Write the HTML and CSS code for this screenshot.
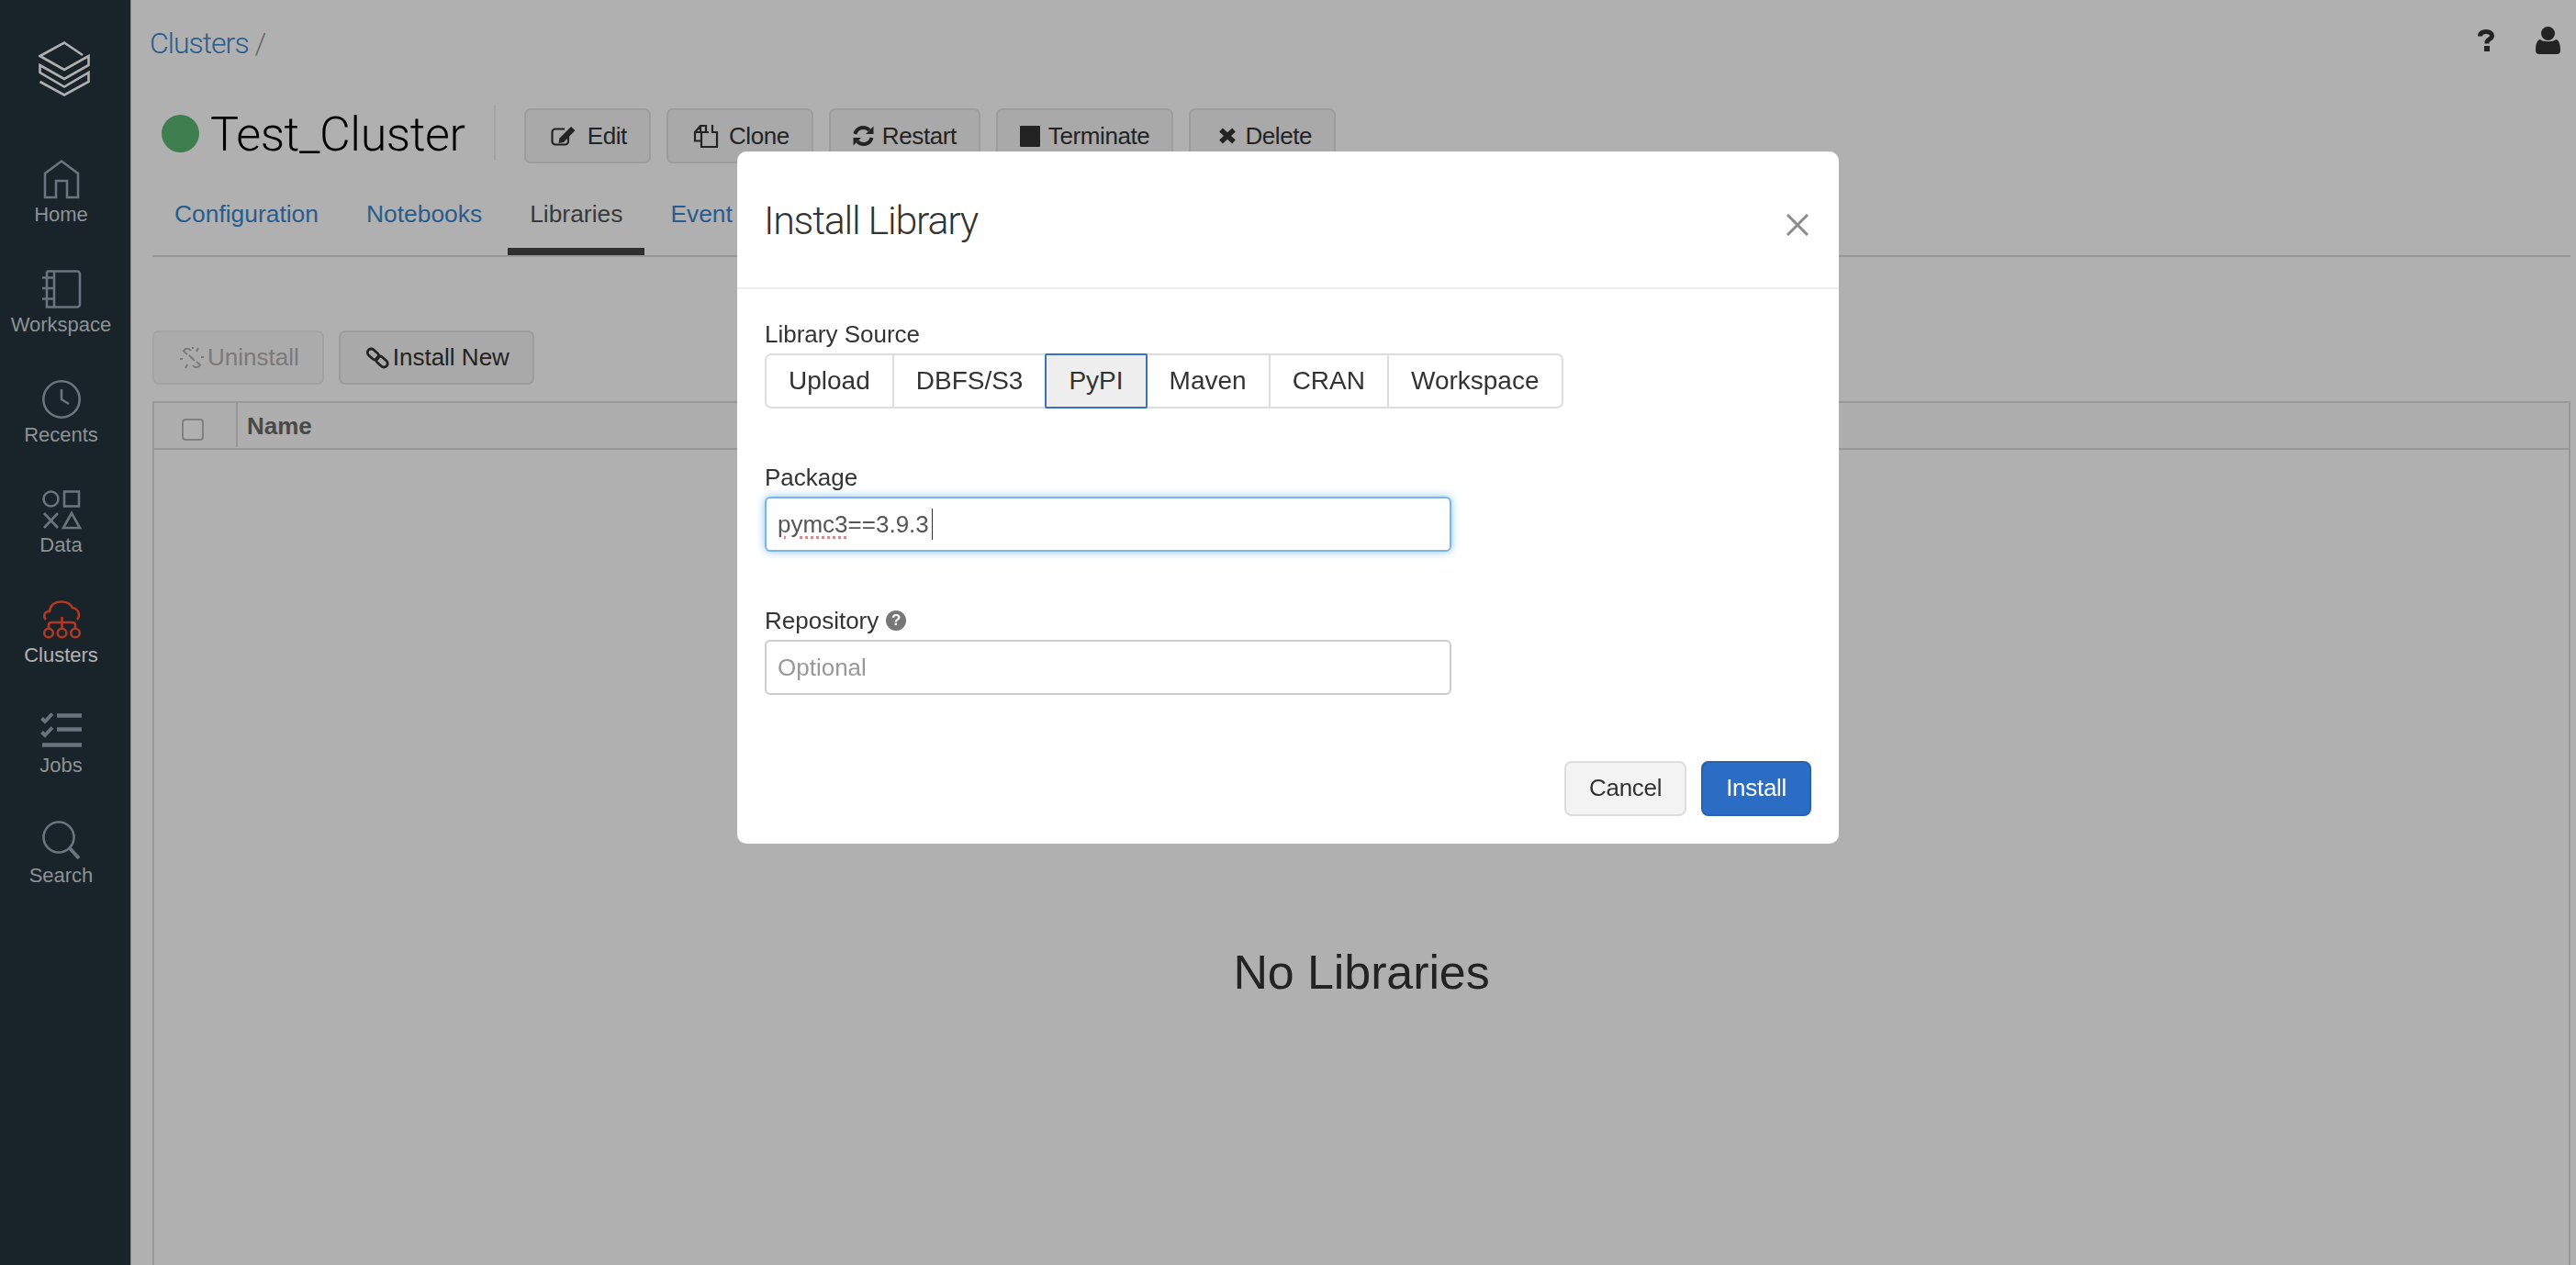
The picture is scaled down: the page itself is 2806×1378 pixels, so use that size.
FILE: index.html
```html
<!DOCTYPE html>
<html lang="en">
<head>
<meta charset="utf-8">
<title>Test_Cluster - Clusters</title>
<link rel="stylesheet" href="styles.css">
</head>
<body>
<div class="app">
  <nav class="sidebar">
    <div class="logo">
      <svg class="logo-svg" viewBox="0 0 56 60"><path d="M48 15 L28 1.5 L1.5 16 L28 31 L54.5 16 V26 L28 41 L1.5 26 V34 L28 49.5 L54.5 34 V44 L28 58.5 L1.5 44"/></svg>
    </div>
    <a class="nav-item">
      <svg class="nav-icon" viewBox="0 0 42 42"><path d="M3 41 V15 L21 1.5 L39 15 V41 H27 V23 H15 V41 Z"/></svg>
      <span>Home</span>
    </a>
    <a class="nav-item">
      <svg class="nav-icon" viewBox="0 0 42 42"><path d="M5 1.5 H38 A3 3 0 0 1 41 4.5 V37.5 A3 3 0 0 1 38 40.5 H5 V1.5 M13 1.5 V40.5 M0 8.5 H13 M0 20 H13 M0 31.5 H13"/></svg>
      <span>Workspace</span>
    </a>
    <a class="nav-item">
      <svg class="nav-icon" viewBox="0 0 42 42"><circle cx="21" cy="21" r="19.7"/><path d="M21 10 V21 L29 26"/></svg>
      <span>Recents</span>
    </a>
    <a class="nav-item">
      <svg class="nav-icon" viewBox="0 0 42 42"><circle cx="9.5" cy="9.5" r="8"/><rect x="24" y="1.5" width="16" height="16"/><path d="M2 25 L17 41 M17 25 L2 41 M32 25 L41 41 H23 Z"/></svg>
      <span>Data</span>
    </a>
    <a class="nav-item nav-active">
      <svg class="nav-icon" viewBox="0 0 42 42"><path d="M4 21 C1 18 2 13 6 12 H8 C9 4 15 1.500 21 1.500 C27 1.500 31 4 33 8 C38 9 40 13 40 16 C40 18 39 20 38 21 M7 30 V27 Q7 24 10 24 H33 Q36 24 36 27 V30 M21.500 18 V30"/><circle cx="7" cy="35.500" r="4.800"/><circle cx="21.500" cy="35.500" r="4.800"/><circle cx="36" cy="35.500" r="4.800"/></svg>
      <span>Clusters</span>
    </a>
    <a class="nav-item">
      <svg class="nav-icon jobs-icon" viewBox="0 0 45 39"><path class="thick" d="M1.500 7 L5 10.500 L13 2 M1.500 22 L5 25.500 L13 17"/><path class="bars" d="M18 4 H45 M18 19 H45 M2 36 H45"/></svg>
      <span>Jobs</span>
    </a>
    <a class="nav-item">
      <svg class="nav-icon" viewBox="0 0 42 42"><circle cx="18" cy="18" r="16.500"/><path class="thick" d="M29.500 29.500 L40 41"/></svg>
      <span>Search</span>
    </a>
  </nav>

  <main class="main">
    <header class="topbar">
      <div class="crumb"><a class="crumb-link">Clusters</a> <span class="crumb-sep">/</span></div>
      <div class="top-icons">
        <svg class="icon-help" viewBox="0 0 18 24"><path d="M2.500 7.500 C2.500 4 5.500 2.500 9 2.500 C13 2.500 15.500 4.500 15.500 7 C15.500 10 11 11 10 13.500 V15.500"/><rect x="7" y="18" width="6" height="6"/></svg>
        <svg class="icon-user" viewBox="0 0 27 30"><circle cx="13.500" cy="7.500" r="7.500"/><path d="M5 14 C8 17 19 17 22 14 C25 14.500 27 18 27 26 C27 29 25 30 23 30 H4 C2 30 0 29 0 26 C0 18 2 14.500 5 14 Z"/></svg>
      </div>
    </header>

    <section class="title-row">
      <span class="status-dot"></span>
      <h1 class="cluster-name">Test_Cluster</h1>
      <span class="title-sep"></span>
      <div class="actions">
        <button class="btn">
          <svg class="ico ico-edit" viewBox="0 0 34 22"><path class="line" d="M22 12 V17 A3.500 3.500 0 0 1 18.500 20.500 H8 A3.500 3.500 0 0 1 4.500 17 V7 A3.500 3.500 0 0 1 8 3.500 H18"/><path class="solid" d="M25 1 L29.500 5 L17 18 L11.500 19 L12.500 13.500 Z"/></svg>
          Edit
        </button>
        <button class="btn">
          <svg class="ico ico-clone" viewBox="0 0 33 26"><path class="line" d="M11 18.500 H5 V9 L11 2 H17 V9 M11 2 V9 H5 M12 9 H20 M12 9 V25 H29 V9 H24 V1 M12 9 L17 9"/></svg>
          Clone
        </button>
        <button class="btn">
          <svg class="ico ico-restart" viewBox="0 0 23 22"><path class="thickline" d="M2.500 9 A9 9 0 0 1 18 5 M20.500 13 A9 9 0 0 1 5 17"/><path class="solid" d="M22.500 0.500 V9 H14 Z M0.500 21.500 V13 H9 Z"/></svg>
          Restart
        </button>
        <button class="btn">
          <span class="stop-square"></span>
          Terminate
        </button>
        <button class="btn">
          <svg class="ico ico-delete" viewBox="0 0 26 18"><path class="xline" d="M9 2.500 L23 15.500 M23 2.500 L9 15.500"/></svg>
          Delete
        </button>
      </div>
    </section>

    <div class="tabs">
      <a class="tab">Configuration</a>
      <a class="tab">Notebooks</a>
      <a class="tab tab-active">Libraries</a>
      <a class="tab">Event</a>
    </div>

    <div class="toolbar">
      <button class="btn btn-tool btn-disabled">
        <svg class="ico ico-chain" viewBox="0 0 26 24"><path class="line" d="M8 8 L4 4.500 C6 1 10 1 12 4 M18 16 L22 19.500 C20 23 16 23 14 20 M10 9 L16 15 M3 13 H0 M8 19 L6 23 M18 5 L20 1 M23 11 H26 M14 2 V0"/></svg>
        Uninstall
      </button>
      <button class="btn btn-tool">
        <svg class="ico ico-chain" viewBox="0 0 25 22"><g class="line"><rect x="-7" y="-4" width="14" height="8" rx="4" transform="translate(7.500 7) rotate(42)"/><rect x="-7" y="-4" width="14" height="8" rx="4" transform="translate(17 15) rotate(42)"/></g></svg>
        Install New
      </button>
    </div>

    <section class="table">
      <div class="table-head">
        <div class="cell-check"><span class="checkbox"></span></div>
        <div class="cell-name">Name</div>
      </div>
      <h2 class="empty">No Libraries</h2>
    </section>
  </main>
</div>

<div class="backdrop"></div>

<div class="modal">
  <div class="modal-head">
    <h3 class="modal-title">Install Library</h3>
    <svg class="modal-close" viewBox="0 0 24 24"><path d="M1 1 L23 23 M23 1 L1 23"/></svg>
  </div>
  <div class="modal-body">
    <div class="field">
      <div class="label">Library Source</div>
      <div class="segments">
        <span class="seg">Upload</span>
        <span class="seg">DBFS/S3</span>
        <span class="seg seg-active">PyPI</span>
        <span class="seg">Maven</span>
        <span class="seg">CRAN</span>
        <span class="seg">Workspace</span>
      </div>
    </div>
    <div class="field">
      <div class="label">Package</div>
      <div class="input input-focus"><span class="misspelt">pymc3</span>==3.9.3<span class="caret"></span></div>
    </div>
    <div class="field">
      <div class="label">Repository <span class="help-dot">?</span></div>
      <div class="input input-empty">Optional</div>
    </div>
  </div>
  <div class="modal-foot">
    <button class="mbtn">Cancel</button>
    <button class="mbtn mbtn-primary">Install</button>
  </div>
</div>
</body>
</html>
```
FILE: styles.css
```css
* { box-sizing: border-box; }
html, body { margin: 0; height: 100%; overflow: hidden; }
body { font-family: "Liberation Sans", Arial, sans-serif; font-size: 26px; color: #333; background: #fff; }
h1, h2, h3 { margin: 0; font-weight: normal; }
button { font: inherit; }

.app { display: flex; height: 100vh; }

/* Sidebar */
.sidebar { width: 143px; flex: none; background: #23333d; border-right: 1px solid #c8c8c8; padding-right: 9px; display: flex; flex-direction: column; align-items: center; gap: 47px; }
.logo { height: 127px; padding-top: 45px; margin-left: 6px; }
.logo-svg { display: block; width: 56px; height: 60px; fill: none; stroke: #fff; stroke-width: 2.6; }
.nav-item { display: flex; flex-direction: column; align-items: center; width: 130px; color: #cbd2d6; font-size: 22px; line-height: 26px; }
.nav-icon { display: block; width: 42px; height: 42px; margin-bottom: 5px; fill: none; stroke: #9aa8b9; stroke-width: 2.6; overflow: visible; }
.nav-icon .thick { stroke-width: 4; }
.nav-icon .bars { stroke-width: 4.600; }
.jobs-icon { width: 45px; }
.nav-active { color: #fff; }
.nav-active .nav-icon { stroke: #ff5236; }

/* Main */
.main { flex: 1; min-width: 0; padding: 0 6px 0 23px; overflow: hidden; display: flex; flex-direction: column; }
.topbar { height: 115px; flex: none; display: flex; justify-content: space-between; align-items: flex-start; }
.crumb { margin-left: -3px; padding-top: 27px; font-family: Roboto, "Liberation Sans", sans-serif; font-weight: 300; font-size: 32px; line-height: 40px; letter-spacing: -1px; }
.crumb-link { color: #3a87cc; }
.crumb-sep { color: #999; }
.top-icons { display: flex; align-items: flex-start; padding-top: 29px; padding-right: 11px; gap: 45px; }
.icon-help { width: 18px; height: 24px; margin-top: 3px; fill: #333; }
.icon-help path { fill: none; stroke: #333; stroke-width: 5; }
.icon-user { width: 27px; height: 30px; fill: #333; }

.title-row { flex: none; height: 63px; display: flex; align-items: flex-start; padding-left: 10px; }
.status-dot { width: 41px; height: 41px; margin-top: 10px; border-radius: 50%; background: #5ab873; flex: none; }
.cluster-name { margin-left: 12px; margin-top: 2px; font-family: Roboto, "Liberation Sans", sans-serif; font-weight: 300; font-size: 52px; line-height: 60px; letter-spacing: -0.4px; color: #000; white-space: nowrap; }
.title-sep { width: 2px; height: 60px; margin-left: 31px; background: #eee; flex: none; }
.actions { display: flex; gap: 17px; margin-left: 31px; margin-top: 3px; }

.btn { display: inline-flex; align-items: center; justify-content: center; gap: 9px; height: 60px; padding: 0 24px; background: #f5f5f5; border: 2px solid #e3e3e3; border-radius: 7px; color: #333; white-space: nowrap; letter-spacing: -0.4px; }
.ico { display: block; flex: none; overflow: visible; }
.ico .line { fill: none; stroke: #333; stroke-width: 2.200; }
.ico .thickline { fill: none; stroke: #333; stroke-width: 4; }
.ico .xline { fill: none; stroke: #333; stroke-width: 5.500; }
.ico .solid { fill: #333; }
.ico-edit { width: 34px; height: 22px; }
.ico-clone { width: 33px; height: 26px; }
.ico-restart { width: 23px; height: 22px; }
.ico-delete { width: 26px; height: 18px; }
.stop-square { width: 22px; height: 23px; background: #333; border-radius: 1px; flex: none; }

.tabs { flex: none; height: 102px; padding-top: 22px; display: flex; gap: 4px; border-bottom: 2px solid #ddd; }
.tab { height: 78px; padding: 0 24px; line-height: 66px; font-size: 26.400px; color: #3a87cc; border-bottom: 8px solid transparent; white-space: nowrap; }
.tab-active { color: #555; border-bottom-color: #444; }

.toolbar { flex: none; display: flex; gap: 16px; margin-top: 80px; }
.btn-tool { height: 59px; padding: 0 25px 0 28px; gap: 4px; letter-spacing: 0; }
.btn-disabled { opacity: .65; color: #888; }
.btn-disabled .line { stroke: #888; stroke-width: 1.600; }
.ico-chain { width: 25px; height: 22px; }
.btn-tool .ico-chain .line { stroke-width: 2.800; }
.btn-disabled.btn-tool .ico-chain { width: 26px; height: 24px; }
.btn-disabled.btn-tool .ico-chain .line { stroke-width: 2; }

.table { flex: 1 0 auto; margin-top: 18px; border: 2px solid #ddd; border-bottom: 0; }
.table-head { display: flex; height: 51px; background: #fcfcfc; border-bottom: 2px solid #ddd; }
.cell-check { width: 91px; height: 48px; padding: 17px 0 0 30px; border-right: 2px solid #ddd; flex: none; }
.checkbox { display: block; width: 24px; height: 24px; border: 2px solid #bbb; border-radius: 4px; background: #fff; }
.cell-name { padding-left: 10px; font-weight: bold; line-height: 50px; color: #6b6b6b; }
.empty { margin-top: 539px; text-align: center; font-size: 52px; line-height: 60px; letter-spacing: -0.1px; color: #333; }

/* Modal */
.backdrop { position: fixed; inset: 0; background: rgba(0, 0, 0, .31); }
.modal { position: absolute; left: 803px; top: 165px; width: 1200px; height: 754px; background: #fff; border-radius: 10px; display: flex; flex-direction: column; }
.modal-head { flex: none; height: 150px; padding: 49px 33px 0 30px; border-bottom: 2px solid #eee; display: flex; justify-content: space-between; align-items: flex-start; }
.modal-title { margin-left: -1px; font-family: Roboto, "Liberation Sans", sans-serif; font-weight: 300; font-size: 43px; line-height: 52px; letter-spacing: -1.25px; color: #333; }
.modal-close { width: 24px; height: 24px; margin-top: 19px; fill: none; stroke: #8a8a8a; stroke-width: 3; }
.modal-body { flex: 1; padding: 34px 30px 0; display: flex; flex-direction: column; gap: 60px; }
.label { line-height: 30px; margin-bottom: 6px; color: #333; display: flex; align-items: center; gap: 8px; }
.help-dot { width: 22px; height: 22px; border-radius: 50%; background: #777; color: #fff; font-weight: bold; font-size: 17px; line-height: 22px; text-align: center; }
.segments { display: inline-flex; height: 60px; font-size: 28px; color: #333; }
.seg { display: flex; align-items: center; padding: 0 24px; border: 2px solid #ddd; margin-left: -2px; white-space: nowrap; }
.seg:first-child { margin-left: 0; border-radius: 7px 0 0 7px; }
.seg:last-child { border-radius: 0 7px 7px 0; }
.seg-active { position: relative; background: #eee; border-color: #3a72ba; border-radius: 2px; }
.input { display: flex; align-items: center; width: 748px; height: 60px; padding: 0 12px; border: 2px solid #ccc; border-radius: 6px; background: #fff; color: #555; white-space: pre; }
.input-focus { border-color: #7db3ee; box-shadow: 0 0 10px rgba(102, 175, 233, .75); }
.input-empty { color: #999; }
.misspelt { text-decoration: underline dotted #ff7b7b 3px; text-underline-offset: 4px; }
.caret { width: 1.500px; height: 34px; background: #333; margin-left: 3px; }
.modal-foot { flex: none; display: flex; justify-content: flex-end; gap: 16px; padding: 0 30px 30px; }
.mbtn { height: 60px; padding: 0 25px 2px; background: #f3f3f3; border: 2px solid #ddd; border-radius: 8px; color: #333; letter-spacing: -0.3px; }
.mbtn-primary { background: #2b6cc4; border-color: #2a63ad; color: #fff; }
```
